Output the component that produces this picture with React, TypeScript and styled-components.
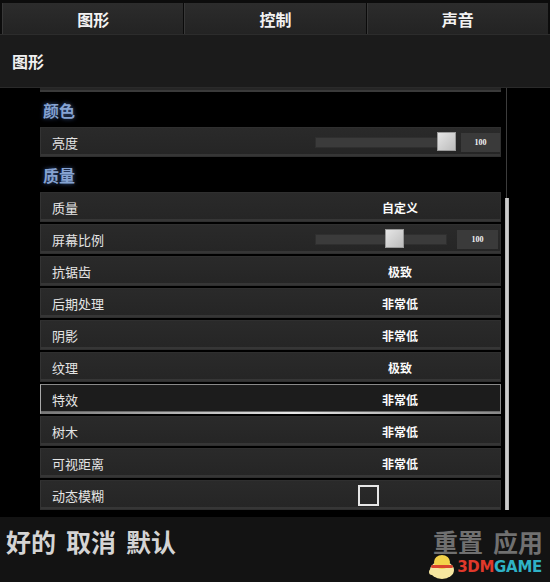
import React from 'react';
import styled, { createGlobalStyle } from 'styled-components';

const GlobalStyle = createGlobalStyle`
  html, body {
    margin: 0;
    padding: 0;
    background: #000;
  }
  body {
    font-family: "Noto Sans CJK SC", "Noto Sans", sans-serif;
    color: #fff;
  }
`;

const Screen = styled.div`
  width: 550px;
  height: 582px;
  display: flex;
  flex-direction: column;
  background: #000;
  overflow: hidden;
`;

const TabBar = styled.div`
  height: 34px;
  box-sizing: border-box;
  padding: 3px 2px 0;
  display: flex;
  background: #0c0c0c;
`;

const Tab = styled.div`
  flex: 1;
  display: flex;
  align-items: center;
  justify-content: center;
  background: linear-gradient(#2c2c2c, #232323);
  border-right: 1px solid #0a0a0a;
  border-left: 1px solid #383838;
  font-size: 16px;
  font-weight: 700;
  color: #f2f2f2;

  &:last-child {
    border-right: none;
  }
`;

const Header = styled.div`
  height: 54px;
  box-sizing: border-box;
  padding: 0 12px;
  display: flex;
  align-items: center;
  background: #1b1b1b;
  border-top: 1px solid #2c2c2c;
  border-bottom: 1px solid #2a2a2a;
  font-size: 16px;
  font-weight: 700;
  color: #f0f0f0;
`;

const Body = styled.div`
  flex: 1;
  display: flex;
  padding-left: 40px;
  background: #000;
`;

const List = styled.div`
  width: 461px;
  display: flex;
  flex-direction: column;
`;

const RowStub = styled.div`
  height: 2px;
  margin-bottom: 2px;
  background: #262626;
  border-bottom: 2px solid #3a3a3a;
`;

const SectionTitle = styled.div`
  height: 33px;
  box-sizing: border-box;
  padding: 0 0 2px 3px;
  display: flex;
  align-items: center;
  font-size: 16px;
  font-weight: 700;
  color: #86a3d2;
  text-shadow: 0 0 4px rgba(80, 120, 200, 0.7);
`;

const Row = styled.div<{ $active?: boolean }>`
  position: relative;
  height: 30px;
  box-sizing: border-box;
  margin-bottom: 2px;
  display: grid;
  grid-template-columns: 1fr 200px;
  align-items: center;
  background: ${(p) => (p.$active ? '#1c1c1c' : 'linear-gradient(#2a2a2a, #252525)')};
  border: 1px solid ${(p) => (p.$active ? '#8a8a8a' : '#2f2f2f')};
  border-left-color: ${(p) => (p.$active ? '#aaa' : '#333')};
  box-shadow: ${(p) =>
    p.$active ? 'inset 0 -2px 0 #6a6a6a' : 'inset 0 -2px 0 #363636'};

  &::after {
    content: '';
    display: ${(p) => (p.$active ? 'block' : 'none')};
    position: absolute;
    left: 0;
    right: 0;
    bottom: -1px;
    height: 2px;
    background: linear-gradient(90deg, #777, #e6e6e6 55%, #888);
  }
`;

const Label = styled.span`
  padding-left: 11px;
  font-size: 13px;
  color: #e4e4e4;
`;

const Value = styled.span`
  text-align: center;
  font-size: 12px;
  font-weight: 700;
  color: #fafafa;
`;

const SliderCell = styled.div`
  display: flex;
  align-items: center;
  padding-left: 15px;
  gap: 10px;
`;

const Track = styled.div<{ $width: number }>`
  position: relative;
  width: ${(p) => p.$width}px;
  height: 9px;
  background: #3b3b3b;
  border: 1px solid #2f2f2f;
`;

const Thumb = styled.div`
  position: absolute;
  top: -6px;
  width: 19px;
  height: 19px;
  background: linear-gradient(135deg, #e6e6e6, #bcbcbc);
  border: 1px solid #9a9a9a;
  box-sizing: border-box;
`;

const NumBox = styled.div`
  width: 41px;
  height: 19px;
  display: flex;
  align-items: center;
  justify-content: center;
  background: #3a3a3a;
  font-family: "Liberation Serif", serif;
  font-size: 8px;
  font-weight: 700;
  color: #f2f2f2;
`;

const CheckBox = styled.div`
  justify-self: start;
  margin-left: 58px;
  width: 21px;
  height: 21px;
  box-sizing: border-box;
  border: 2px solid #e6e6e6;
`;

const ScrollBar = styled.div`
  width: 6px;
  margin-left: 3px;
  display: flex;
  flex-direction: column;
  padding-bottom: 7px;
`;

const ScrollRail = styled.div`
  height: 110px;
  background: linear-gradient(90deg, transparent 2px, #3c3c3c 2px, #3c3c3c 3px, transparent 3px);
`;

const ScrollThumb = styled.div`
  flex: 1;
  margin: 0 1px;
  background: linear-gradient(90deg, #aaa, #d6d6d6, #aaa);
`;

const Footer = styled.div`
  position: relative;
  height: 65px;
  box-sizing: border-box;
  padding: 0 7px 17px 6px;
  display: flex;
  align-items: center;
  justify-content: space-between;
  background: #131313;
`;

const ButtonGroup = styled.div`
  display: flex;
  gap: 10px;
`;

const FooterButton = styled.span<{ $dim?: boolean }>`
  font-size: 25px;
  line-height: 1;
  font-weight: 700;
  color: ${(p) => (p.$dim ? '#707070' : '#d4d4d4')};
`;

const Watermark = styled.div`
  position: absolute;
  right: 8px;
  bottom: 1px;
  display: flex;
  align-items: center;
`;

const MarkText = styled.span<{ $color: string }>`
  font-family: "DejaVu Sans", sans-serif;
  font-size: 15px;
  line-height: 1;
  font-weight: 700;
  color: ${(p) => p.$color};
  letter-spacing: -0.3px;
`;

type Setting =
  | { kind: 'value'; label: string; value: string; active?: boolean }
  | { kind: 'slider'; label: string; pos: number; width: number }
  | { kind: 'check'; label: string };

const quality: Setting[] = [
  { kind: 'value', label: '质量', value: '自定义' },
  { kind: 'slider', label: '屏幕比例', pos: 69, width: 130 },
  { kind: 'value', label: '抗锯齿', value: '极致' },
  { kind: 'value', label: '后期处理', value: '非常低' },
  { kind: 'value', label: '阴影', value: '非常低' },
  { kind: 'value', label: '纹理', value: '极致' },
  { kind: 'value', label: '特效', value: '非常低', active: true },
  { kind: 'value', label: '树木', value: '非常低' },
  { kind: 'value', label: '可视距离', value: '非常低' },
  { kind: 'check', label: '动态模糊' },
];

const SettingRow: React.FC<{ s: Setting }> = ({ s }) => (
  <Row $active={s.kind === 'value' && s.active}>
    <Label>{s.label}</Label>
    {s.kind === 'value' && <Value>{s.value}</Value>}
    {s.kind === 'slider' && (
      <SliderCell>
        <Track $width={s.width}>
          <Thumb style={{ left: s.pos }} />
        </Track>
        <NumBox>100</NumBox>
      </SliderCell>
    )}
    {s.kind === 'check' && <CheckBox />}
  </Row>
);

const Logo: React.FC = () => (
  <svg width="30" height="28" viewBox="0 0 30 28">
    <ellipse cx="15" cy="17" rx="12" ry="9" fill="#f6e6a0" />
    <ellipse cx="15" cy="9" rx="8" ry="7" fill="#f3d24a" />
    <rect x="4" y="12" width="22" height="3" rx="1.5" fill="#d9442e" />
    <circle cx="5" cy="19" r="3" fill="#f6e6a0" />
  </svg>
);

const App: React.FC = () => {
  return (
    <>
      <GlobalStyle />
      <Screen>
        <TabBar>
          <Tab>图形</Tab>
          <Tab>控制</Tab>
          <Tab>声音</Tab>
        </TabBar>
        <Header>图形</Header>
        <Body>
          <List>
            <RowStub />
            <SectionTitle>颜色</SectionTitle>
            <SettingRow s={{ kind: 'slider', label: '亮度', pos: 121, width: 140 }} />
            <SectionTitle>质量</SectionTitle>
            {quality.map((s) => (
              <SettingRow key={s.label} s={s} />
            ))}
          </List>
          <ScrollBar>
            <ScrollRail />
            <ScrollThumb />
          </ScrollBar>
        </Body>
        <Footer>
          <ButtonGroup>
            <FooterButton>好的</FooterButton>
            <FooterButton>取消</FooterButton>
            <FooterButton>默认</FooterButton>
          </ButtonGroup>
          <ButtonGroup>
            <FooterButton $dim>重置</FooterButton>
            <FooterButton $dim>应用</FooterButton>
          </ButtonGroup>
          <Watermark>
            <Logo />
            <MarkText $color="#e0392b">3DM</MarkText>
            <MarkText $color="#2fb2c6">GAME</MarkText>
          </Watermark>
        </Footer>
      </Screen>
    </>
  );
};

export default App;
